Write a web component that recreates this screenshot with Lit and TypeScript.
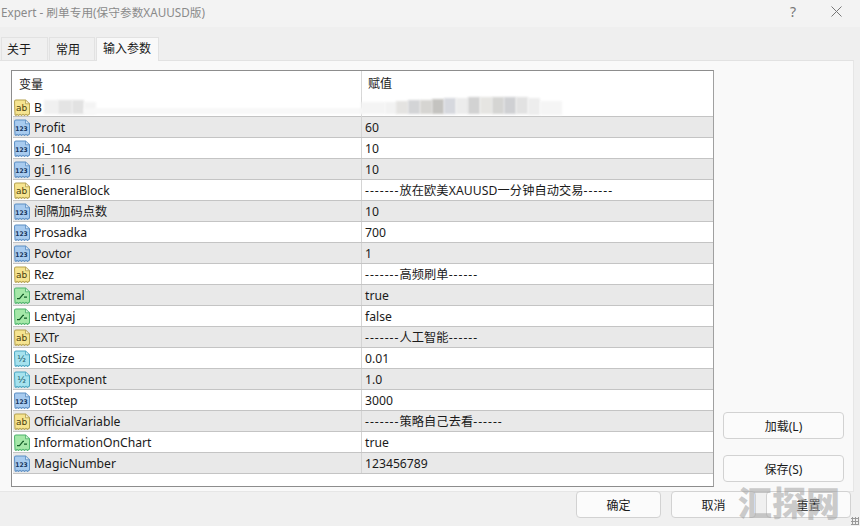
import { LitElement, html, css, svg } from "lit";
import { customElement } from "lit/decorators.js";
import { styleMap } from "lit/directives/style-map.js";

type Kind = "ab" | "int" | "bool" | "dbl";
const ROWS: [Kind, string, string][] = [
  ["ab", "B", ""],
  ["int", "Profit", "60"],
  ["int", "gi_104", "10"],
  ["int", "gi_116", "10"],
  ["ab", "GeneralBlock", "-------放在欧美XAUUSD一分钟自动交易------"],
  ["int", "间隔加码点数", "10"],
  ["int", "Prosadka", "700"],
  ["int", "Povtor", "1"],
  ["ab", "Rez", "-------高频刷单------"],
  ["bool", "Extremal", "true"],
  ["bool", "Lentyaj", "false"],
  ["ab", "EXTr", "-------人工智能------"],
  ["dbl", "LotSize", "0.01"],
  ["dbl", "LotExponent", "1.0"],
  ["int", "LotStep", "3000"],
  ["ab", "OfficialVariable", "-------策略自己去看------"],
  ["bool", "InformationOnChart", "true"],
  ["int", "MagicNumber", "123456789"],
];

const COL: Record<Kind, [string, string, string]> = {
  ab: ["#f6e490", "#b5a14f", "#4a3e0c"],
  int: ["#a8cbef", "#5c8fc4", "#16345c"],
  bool: ["#a5e8a8", "#4eb36c", "#145c28"],
  dbl: ["#a6e2ee", "#4ba6c2", "#14505f"],
};

function icon(k: Kind) {
  const [f, s, t] = COL[k];
  const body = svg`<path d="M.5 2.5a1.5 1.5 0 0 1 1.5-1.5h9.5l4 3.5v9.5l-2 1.5-1.5-1-1.5 1-1.5-1-1.5 1-1.5-1-1.5 1-1.5-1-1 1-1-.8z" fill=${f} stroke=${s}/>
    <path d="M11.5 1v3.5h4" fill="#ffffff" fill-opacity=".55" stroke=${s} stroke-width=".8"/>`;
  let inner;
  if (k === "ab") inner = svg`<text x="7.5" y="11.6" font-size="9" text-anchor="middle" fill=${t} font-family="DejaVu Sans">ab</text>`;
  else if (k === "int") inner = svg`<text x="7.5" y="11.2" font-size="6" font-weight="700" text-anchor="middle" fill=${t} font-family="DejaVu Sans">123</text>`;
  else if (k === "dbl") inner = svg`<text x="7.5" y="11.4" font-size="9" text-anchor="middle" fill=${t} font-family="DejaVu Sans">½</text>`;
  else inner = svg`<path d="M3 11h2.5l3.5-4h1M10 9.5h3" fill="none" stroke=${t} stroke-width="1.2"/>`;
  return html`<svg class="ico" width="16" height="17" viewBox="0 0 16 16" preserveAspectRatio="none">${body}${inner}</svg>`;
}

/* Dashes in the reference are wider than the installed font's: set them apart. */
function value(v: string) {
  const m = v.match(/^(-+)(.*?)(-+)$/);
  if (!m) return v;
  return html`<span class="dash">${m[1]}</span><span class="mid">${m[2]}</span><span class="dash">${m[3]}</span>`;
}

/* Mosaic that masks the first row: [left, top, width, height, colour] */
const BLUR: [number, number, number, number, string][] = [
  [44, 100, 14, 14, "#f0f0f0"],
  [58, 100, 14, 14, "#e4e4e4"],
  [72, 100, 12, 14, "#e2e2e2"],
  [84, 102, 12, 12, "#f4f4f4"],
  [84, 108, 280, 6, "#f8f8f8"],
  [361, 102, 24, 12, "#f4f4f4"],
  [385, 102, 12, 12, "#f2f2f2"],
  [396, 101, 12, 13, "#e4e3e1"],
  [408, 100, 12, 14, "#d3d4d6"],
  [420, 100, 12, 14, "#d6d5d2"],
  [432, 99, 12, 15, "#c4c3c0"],
  [444, 98, 12, 16, "#d6d8de"],
  [456, 98, 12, 16, "#ececec"],
  [468, 97, 12, 17, "#d2d2d2"],
  [480, 97, 12, 17, "#e6e5e2"],
  [492, 97, 12, 17, "#d5d5d3"],
  [504, 97, 12, 17, "#cfd0d3"],
  [516, 97, 12, 17, "#e2e2e2"],
  [528, 98, 12, 17, "#ededed"],
  [540, 101, 22, 14, "#f5f5f5"],
];

@customElement("app-root")
export class AppRoot extends LitElement {
  static styles = css`
    :host {
      display: flex;
      flex-direction: column;
      position: relative;
      width: 860px;
      height: 526px;
      overflow: hidden;
      background: #f0f0f0;
      font-family: "Noto Sans", "Noto Sans CJK SC", sans-serif;
      font-size: 12px;
      color: #1a1a1a;
    }
    .title {
      height: 27px;
      box-sizing: border-box;
      flex: none;
      background: #f3f3f3;
      display: flex;
      align-items: center;
      padding: 0 18px 5px 1px;
      color: #8a8a8a;
      font-size: 11.7px;
    }
    .title .t { flex: 1; }
    .title .q { font-size: 14px; margin-right: 35px; color: #777; }
    .tabs {
      height: 33px;
      flex: none;
      display: flex;
      align-items: flex-end;
      gap: 1px;
      padding-left: 1px;
      background: #efefef;
      position: relative;
    }
    .tab {
      height: 23px;
      width: 47px;
      box-sizing: border-box;
      background: #f0f0f0;
      border: 1px solid #e2e2e2;
      border-bottom: none;
      padding-left: 5px;
      line-height: 23px;
    }
    .tab + .tab { width: 46px; padding-left: 6px; }
    .tab.on {
      width: 63px;
      height: 24px;
      margin-bottom: -1px;
      background: #f9f9f9;
      position: relative;
      padding-left: 6px;
      line-height: 22px;
    }
    .panel {
      flex: none;
      width: 854px;
      height: 432px;
      box-sizing: border-box;
      background: #f9f9f9;
      border-top: 1px solid #e2e2e2;
      border-right: 1px solid #e6e6e6;
      border-bottom: 1px solid #e6e6e6;
      padding: 9px 9px 4px 11px;
      display: flex;
      gap: 9px;
    }
    .table {
      width: 703px;
      height: 417px;
      box-sizing: border-box;
      background: #fff;
      border: 1px solid #8d8d8d;
      border-right-color: #a0a0a0;
      padding-left: 1px;
    }
    .row, .head {
      display: grid;
      grid-template-columns: 348px 1fr;
    }
    .head {
      height: 26px;
      align-items: center;
      line-height: 25px;
    }
    .head .n { padding-left: 6px; }
    .head .v { border-left: 1px solid #d8d8d8; height: 26px; padding-left: 6px; }
    .row {
      height: 21px;
      box-sizing: border-box;
      border-bottom: 1px solid #c4c4c4;
      align-items: center;
      line-height: 22px;
      font-size: 12.2px;
    }
    .row.first { height: 20px; }
    .row.alt { background: #e9e9e9; }
    .row .n { display: flex; align-items: center; gap: 4px; padding-left: 1px; white-space: nowrap; height: 20px; }
    .row .n span { padding-top: 2px; }
    .row .v { border-left: 1px solid #d4d4d4; padding-left: 3px; height: 20px; white-space: nowrap; }
    .dash { letter-spacing: 1px; }
    .mid { letter-spacing: 0.1px; }
    .ico { flex: none; }
    .side {
      display: flex;
      flex-direction: column;
      justify-content: flex-end;
      gap: 16px;
      padding-bottom: 5px;
    }
    .btn {
      box-sizing: border-box;
      height: 27px;
      border: 1px solid #d2d2d2;
      border-radius: 4px;
      background: #fbfbfb;
      display: flex;
      align-items: center;
      justify-content: center;
      font-size: 12px;
      color: #1a1a1a;
    }
    .side .btn { width: 121px; }
    .foot {
      display: flex;
      gap: 10px;
      padding-left: 576px;
      margin-top: -1px;
    }
    .foot .btn { width: 85px; }
    .blur { position: absolute; filter: blur(1px); }
    .mark {
      position: absolute;
      left: 738px;
      top: 480px;
      font-family: "Noto Sans CJK SC", sans-serif;
      font-weight: 900;
      font-size: 34px;
      line-height: 44px;
      color: rgba(160, 160, 160, 0.55);
      white-space: nowrap;
    }
    .grip {
      position: absolute;
      right: 1px;
      bottom: 1px;
      width: 8px;
      height: 8px;
      background: radial-gradient(circle, #9a9a9a 0 1px, transparent 1.1px) 0 0 / 3px 3px;
    }
  `;

  render() {
    return html`
      <div class="title">
        <span class="t">Expert - 刷单专用(保守参数XAUUSD版)</span>
        <span class="q">?</span>
        <svg width="11" height="11" viewBox="0 0 11 11"><path d="M.5.5l10 10M10.5.5l-10 10" stroke="#777" fill="none"/></svg>
      </div>
      <div class="tabs">
        <div class="tab">关于</div>
        <div class="tab">常用</div>
        <div class="tab on">输入参数</div>
      </div>
      <div class="panel">
        <div class="table">
          <div class="head"><div class="n">变量</div><div class="v">赋值</div></div>
          ${ROWS.map(
            ([k, n, v], i) => html`<div class="row ${i % 2 ? "alt" : ""} ${i === 0 ? "first" : ""}">
              <div class="n">${icon(k)}<span>${n}</span></div>
              <div class="v">${value(v)}</div>
            </div>`
          )}
        </div>
        <div class="side">
          <div class="btn">加载(L)</div>
          <div class="btn">保存(S)</div>
        </div>
      </div>
      <div class="foot">
        <div class="btn">确定</div>
        <div class="btn">取消</div>
        <div class="btn">重置</div>
      </div>
      ${BLUR.map(
        ([l, t, w, h, c]) => html`<div class="blur" style=${styleMap({ left: l + "px", top: t + "px", width: w + "px", height: h + "px", background: c })}></div>`
      )}
      <div class="mark">汇探网</div>
      <div class="grip"></div>
    `;
  }
}
